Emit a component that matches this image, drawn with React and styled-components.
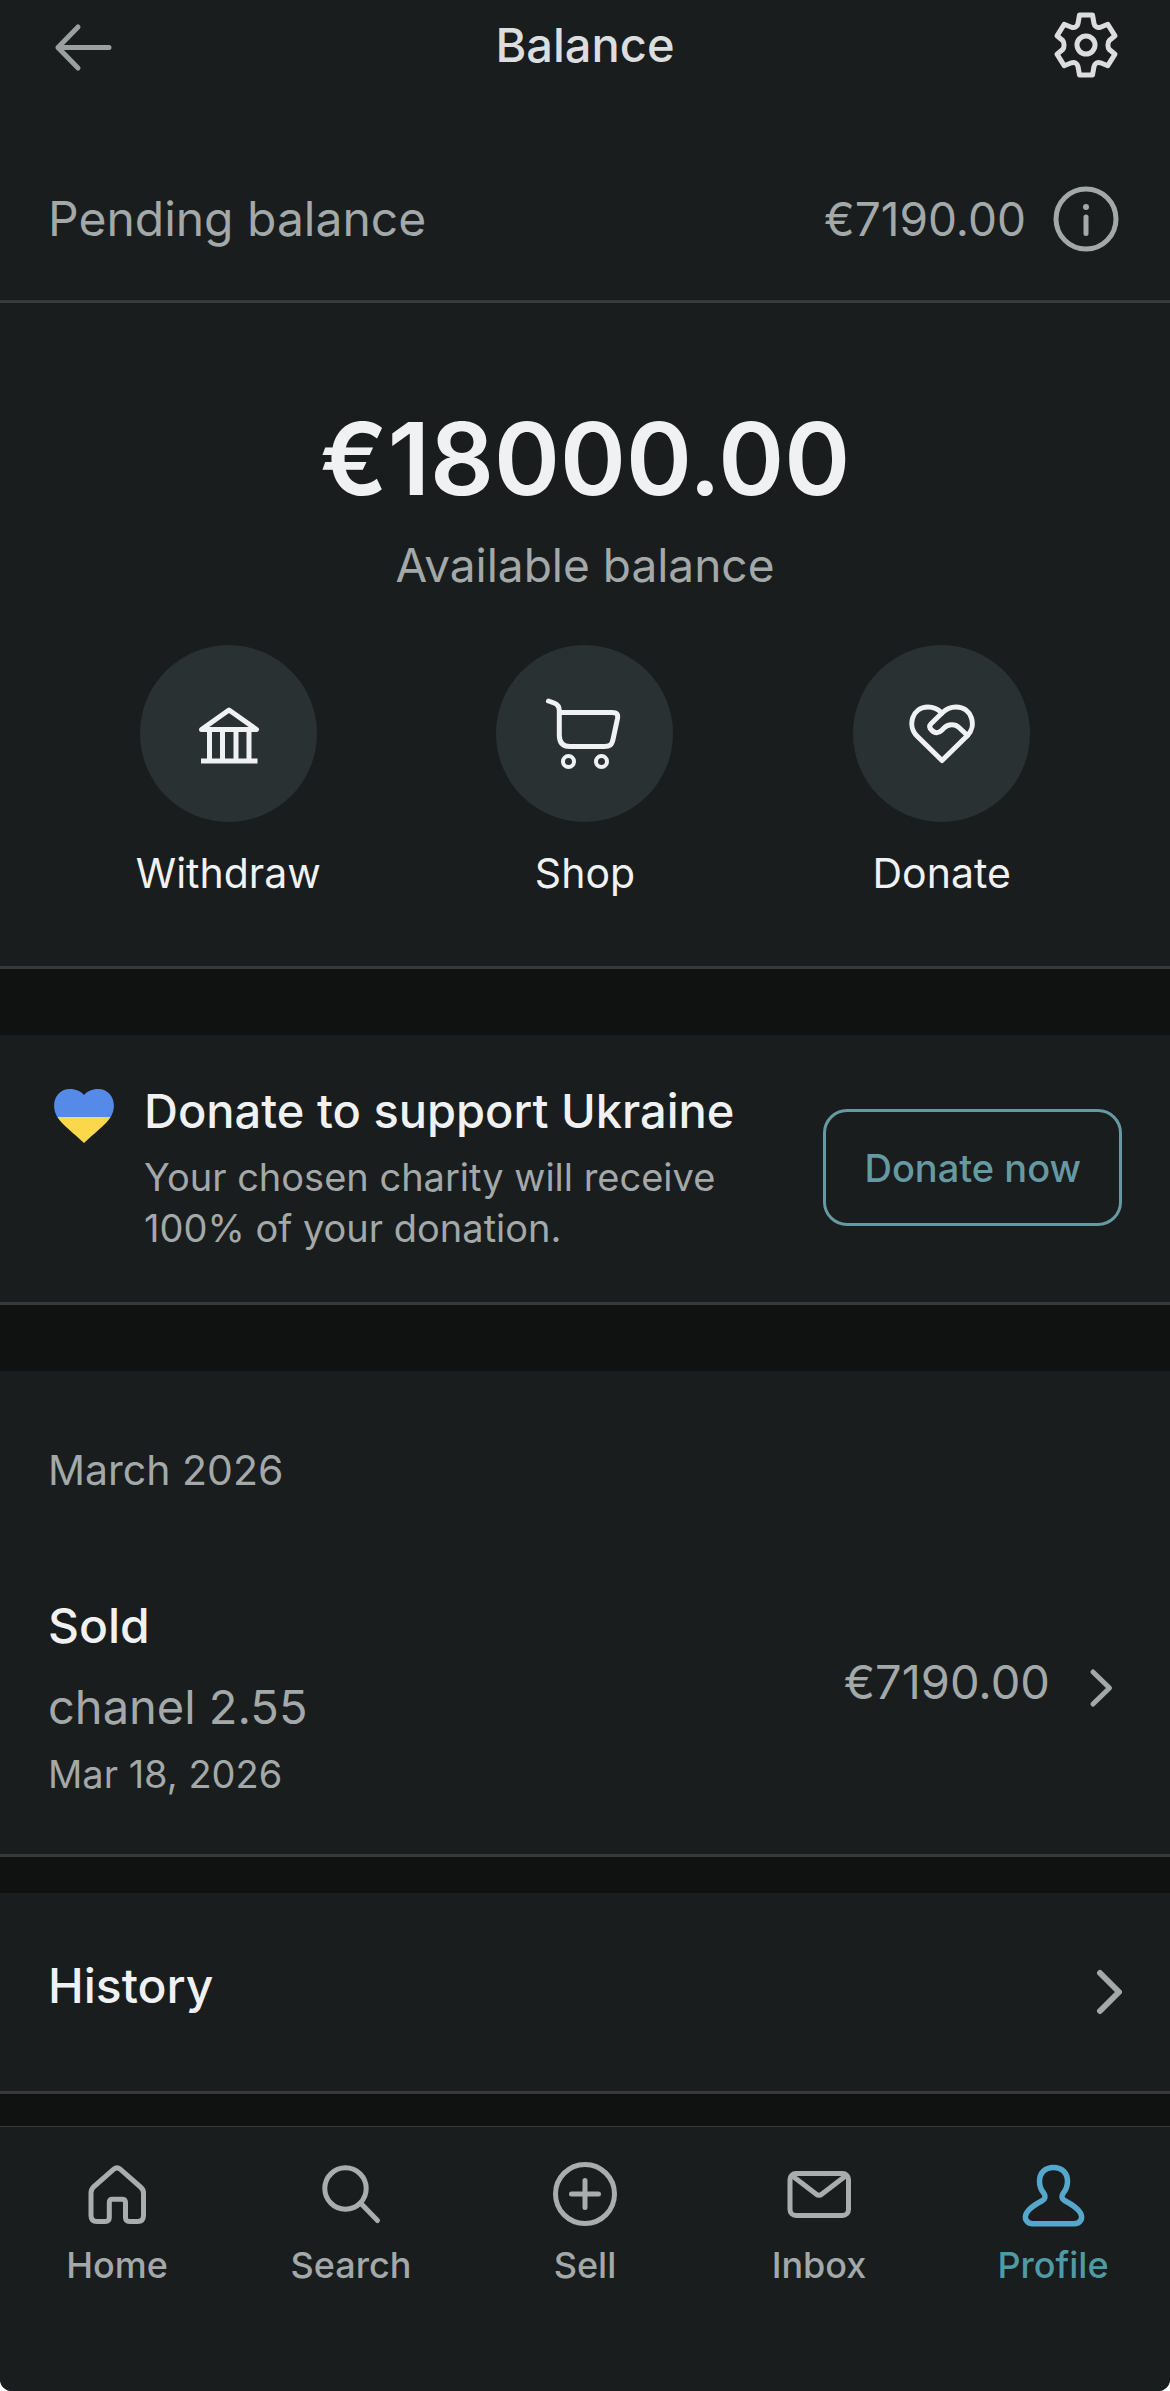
import React from 'react'
import styled, { createGlobalStyle } from 'styled-components'

const GlobalStyle = createGlobalStyle`
  * {
    box-sizing: border-box;
  }
  body {
    margin: 0;
    background: #fff;
    font-family: Inter, Roboto, "Liberation Sans", sans-serif;
  }
  h1, h2, h3, p {
    margin: 0;
    font-weight: 400;
  }
  button {
    margin: 0;
    padding: 0;
    border: 0;
    background: none;
    color: inherit;
    font-family: inherit;
    cursor: pointer;
  }
  a {
    color: inherit;
    text-decoration: none;
  }
`

const Page = styled.div`
  display: flex;
  flex-direction: column;
  min-height: 100vh;
  background: #101211;
  color: #f0f1f3;
  border-radius: 0 0 12px 12px;
  overflow: hidden;
`

const Header = styled.header`
  display: grid;
  grid-template-columns: 72px 1fr 72px;
  align-items: center;
  height: 90px;
  padding: 0 48px;
  background: #191d1e;
  color: #dcdddf;
`

const Title = styled.h1`
  font-size: 47px;
  line-height: 60px;
  font-weight: 500;
  text-align: center;
`

const IconButton = styled.button`
  display: flex;
  color: ${props => props.$muted ? '#9a9fa0' : 'inherit'};
`

const Icon = styled.svg`
  flex: none;
  display: block;
  width: ${props => props.$width || 72}px;
  height: ${props => props.$height || 72}px;
  fill: none;
  stroke: currentColor;
  stroke-width: 5;
  stroke-linecap: round;
  stroke-linejoin: round;
`

const Panel = styled.section`
  background: #191d1e;
  border-bottom: 3px solid #37393b;
  margin-bottom: ${props => props.$gap || 0}px;
`

const PendingRow = styled.div`
  display: flex;
  align-items: center;
  justify-content: space-between;
  padding: 93px 48px 45px;
`

const Text = styled.p`
  font-size: 48px;
  line-height: 60px;
  color: #a3a8a9;
`

const Amount = styled(Text)`
  font-size: ${props => props.$large ? 47 : 46}px;
`

const Side = styled.div`
  display: flex;
  align-items: ${props => props.$top ? 'flex-start' : 'center'};
  gap: 24px;
  color: #a3a8a9;
`

const Summary = styled.div`
  padding: 96px 50px 66px;
  text-align: center;
`

const Total = styled.h2`
  font-size: 100px;
  line-height: 120px;
  font-weight: 600;
`

const TotalLabel = styled(Text)`
  margin-top: 16px;
  font-size: 46px;
`

const Actions = styled.div`
  display: grid;
  grid-template-columns: repeat(3, 1fr);
  margin-top: 50px;
`

const Action = styled.button`
  display: flex;
  flex-direction: column;
  align-items: center;
  gap: 24px;
  font-size: 41px;
  line-height: 54px;
`

const Circle = styled.span`
  display: flex;
  align-items: center;
  justify-content: center;
  width: 177px;
  height: 177px;
  border-radius: 50%;
  background: #2a3133;
`

const Charity = styled.div`
  display: flex;
  align-items: center;
  gap: 24px;
  padding: 46px 48px 48px;
`

const CharityHeart = styled(Icon)`
  align-self: flex-start;
  stroke: none;
`

const CharityText = styled.div`
  display: flex;
  flex-direction: column;
  flex: 1;
  gap: 11px;
  max-width: 620px;
  margin-right: auto;
`

const RowTitle = styled.h3`
  font-size: ${props => props.$small ? 47 : 48}px;
  line-height: 60px;
  font-weight: 500;
`

const Small = styled.p`
  font-size: 38px;
  line-height: 51px;
  color: #a3a8a9;
`

const OutlineButton = styled.button`
  flex: none;
  height: 117px;
  padding: 0 38px;
  border: 3px solid #6799a2;
  border-radius: 24px;
  color: #6799a2;
  font-size: 38px;
  font-weight: 500;
`

const Month = styled.h2`
  padding: 72px 48px 24px;
  font-size: 41px;
  line-height: 54px;
  color: #a3a8a9;
`

const RowLink = styled.a`
  display: flex;
  align-items: center;
  justify-content: space-between;
  padding: 0 48px;
`

const Sale = styled.div`
  padding: 75px 0 54px;
`

const ItemName = styled(Text)`
  margin: 21px 0 12px;
  font-size: 47px;
`

const HistoryLink = styled(RowLink)`
  align-items: flex-start;
  padding: 63px 48px;
`

const TabBar = styled.nav`
  display: grid;
  grid-template-columns: repeat(5, 1fr);
  flex: 1;
  padding: 31px 0 105px;
  background: #191d1e;
  border-top: 1px solid #37393b;
`

const Tab = styled.a`
  display: flex;
  flex-direction: column;
  align-items: center;
  gap: 14px;
  font-size: 36px;
  line-height: 42px;
  font-weight: 500;
  color: ${props => props.$active ? '#4f9ba5' : '#a3a8a9'};

  svg {
    color: ${props => props.$active ? '#55a7cb' : '#a9adae'};
  }
`

const ArrowIcon = () => (
  <Icon viewBox="0 0 72 72">
    <path d="M30 18 10 38.5 30 59M10 38.5H61" />
  </Icon>
)

const GearIcon = () => (
  <Icon viewBox="0 0 72 72">
    <path d="M29.5 6H42.5L44 14.5C44.5 17.5 47.5 19.3 50.5 18.2L57.8 15.3 65 26.8 59.3 31.5C57.5 33.5 57.5 38.5 59.3 40.5L65 45.2 57.8 56.7 50.5 53.8C47.5 52.7 44.5 54.5 44 57.5L42.5 66H29.5L28 57.5C27.5 54.5 24.5 52.7 21.5 53.8L14.2 56.7 7 45.2 12.7 40.5C14.5 38.5 14.5 33.5 12.7 31.5L7 26.8 14.2 15.3 21.5 18.2C24.5 19.3 27.5 17.5 28 14.5Z" />
    <circle cx="36" cy="36" r="9" />
  </Icon>
)

const InfoIcon = () => (
  <Icon viewBox="0 0 72 72">
    <circle cx="36" cy="36" r="30" />
    <path d="M36 34V50.5" />
    <circle cx="36" cy="24" r="3" fill="currentColor" stroke="none" />
  </Icon>
)

const BankIcon = () => (
  <Icon viewBox="0 0 72 72">
    <path d="M37 12 64.5 31.5H9.5Z" />
    <path d="M17.5 31.5V62M30.5 31.5V62M44 31.5V62M57 31.5V62M9 63H65.5" strokeLinecap="butt" />
  </Icon>
)

const CartIcon = () => (
  <Icon viewBox="0 0 84 84" $width={84} $height={84}>
    <path d="M5.5 9 11 11C14.5 12.3 16.3 14 16.3 18.5V43C16.3 50.5 19.5 54.5 27 54.5H61C67 54.5 68.8 53 70 47.5L74.5 26.5C75.2 22 74 20.5 69 20.5H16.3" />
    <circle cx="25.5" cy="69.5" r="5.5" strokeWidth="4" />
    <circle cx="58.5" cy="69.5" r="5.5" strokeWidth="4" />
  </Icon>
)

const HandHeartIcon = () => (
  <Icon viewBox="0 0 72 72">
    <path d="M36 62.5 11 38C1 28 6 9 22 9 27.5 9 32 11 36 15 40 11 44.5 9 50 9 66 9 71 28 61.5 37.5Z" />
    <path d="M36 15 24.8 26C22.8 28 23.5 30 25.5 32 28.5 35.5 32.5 35.5 35.5 32.5L38 30C42 26 49 25.5 53 29.5L61.5 37.5" />
  </Icon>
)

const UkraineHeart = () => (
  <CharityHeart viewBox="0 0 72 72">
    <clipPath id="heart">
      <path d="M36 62C27 53 14 44 9 35.5 2 23 8 8 22 8 28 8 33 10.5 36 14 39 10.5 44 8 50 8 64 8 70 23 63 35.5 58 44 45 53 36 62Z" />
    </clipPath>
    <g clipPath="url(#heart)">
      <rect width="72" height="36" fill="#558ae8" />
      <rect y="36" width="72" height="36" fill="#fbd84b" />
    </g>
  </CharityHeart>
)

const Chevron = ({ large }) => (
  <Icon viewBox="0 0 48 72" $width={48}>
    <path d={large ? 'M26 17 45 36 26 55' : 'M19 20 35.5 36 19 52'} strokeWidth={large ? 6 : 5} />
  </Icon>
)

const HomeIcon = () => (
  <path d="M32.8 11.2Q36 8.5 39.2 11.2L59.5 29Q62.5 31.5 62.5 35V57.5Q62.5 63.5 56.5 63.5H48.5Q44.5 63.5 44.5 59.5V44.5Q44.5 41.3 41 41.3H31.5Q28.3 41.3 28.3 44.5V59.5Q28.3 63.5 24.3 63.5H16Q10 63.5 10 57.5V35Q10 31.5 12.5 29Z" />
)

const SearchIcon = () => (
  <>
    <circle cx="30.5" cy="30.5" r="20.7" />
    <path d="M46 45.5 62.5 62.5" />
  </>
)

const SellIcon = () => (
  <>
    <circle cx="36" cy="36" r="29.5" />
    <path d="M36 22.5V49.5M22.5 36H49.5" />
  </>
)

const InboxIcon = () => (
  <>
    <rect x="7" y="15.5" width="58.5" height="42" rx="6" />
    <path d="M9.5 18 33 36Q36 38.5 39 36L62.5 18" />
  </>
)

const ProfileIcon = () => (
  <path strokeWidth="5.5" d="M36.5 9.5C28 9.5 22.5 15 22.5 23.5 22.5 29 24.5 32.5 27 35.5 29 38.5 28 41 25.5 42.5 18 46.5 12 50.5 9.5 55 6.500 60.5 10 65.8 16 65.8H57C63 65.8 66.5 60.5 63.5 55 61 50.5 55 46.5 47.5 42.5 45 41 44 38.5 46 35.5 48.5 32.5 50.5 29 50.5 23.5 50.5 15 45 9.5 36.5 9.5Z" />
)

const actions = [
  { label: 'Withdraw', Glyph: BankIcon },
  { label: 'Shop', Glyph: CartIcon },
  { label: 'Donate', Glyph: HandHeartIcon },
]

const tabs = [
  { label: 'Home', Glyph: HomeIcon },
  { label: 'Search', Glyph: SearchIcon },
  { label: 'Sell', Glyph: SellIcon },
  { label: 'Inbox', Glyph: InboxIcon },
  { label: 'Profile', Glyph: ProfileIcon, active: true },
]

const App = () => (
  <>
    <GlobalStyle />
    <Page>
      <Header>
        <IconButton $muted aria-label="Back"><ArrowIcon /></IconButton>
        <Title>Balance</Title>
        <IconButton aria-label="Settings"><GearIcon /></IconButton>
      </Header>

      <main>
        <Panel>
          <PendingRow>
            <Text>Pending balance</Text>
            <Side>
              <Amount>€7190.00</Amount>
              <IconButton aria-label="About pending balance"><InfoIcon /></IconButton>
            </Side>
          </PendingRow>
        </Panel>

        <Panel $gap={66}>
          <Summary>
            <Total>€18000.00</Total>
            <TotalLabel>Available balance</TotalLabel>
            <Actions>
              {actions.map(({ label, Glyph }) => (
                <Action key={label}>
                  <Circle><Glyph /></Circle>
                  {label}
                </Action>
              ))}
            </Actions>
          </Summary>
        </Panel>

        <Panel $gap={66}>
          <Charity>
            <UkraineHeart />
            <CharityText>
              <RowTitle $small>Donate to support Ukraine</RowTitle>
              <Small>Your chosen charity will receive 100% of your donation.</Small>
            </CharityText>
            <OutlineButton>Donate now</OutlineButton>
          </Charity>
        </Panel>

        <Panel $gap={36}>
          <Month>March 2026</Month>
          <RowLink href="#sale">
            <Sale>
              <RowTitle>Sold</RowTitle>
              <ItemName>chanel 2.55</ItemName>
              <Small>Mar 18, 2026</Small>
            </Sale>
            <Side $top>
              <Amount $large>€7190.00</Amount>
              <Chevron />
            </Side>
          </RowLink>
        </Panel>

        <Panel $gap={32}>
          <HistoryLink href="#history">
            <RowTitle>History</RowTitle>
            <Side>
              <Chevron large />
            </Side>
          </HistoryLink>
        </Panel>
      </main>

      <TabBar>
        {tabs.map(({ label, Glyph, active }) => (
          <Tab key={label} href={'#' + label.toLowerCase()} $active={active}>
            <Icon viewBox="0 0 72 72"><Glyph /></Icon>
            {label}
          </Tab>
        ))}
      </TabBar>
    </Page>
  </>
)

export default App
